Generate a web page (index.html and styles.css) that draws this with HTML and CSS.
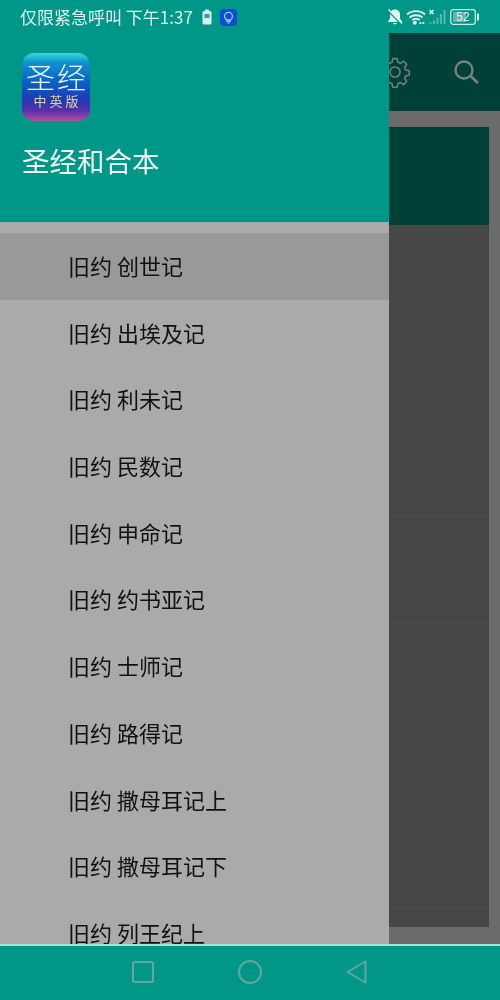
FILE: index.html
```html
<!DOCTYPE html>
<html lang="zh-CN">
<head>
    <meta charset="UTF-8">
    <meta name="viewport" content="width=device-width, initial-scale=1.0">
    <title>圣经和合本</title>
    <link rel="stylesheet" href="styles.css">
</head>
<body>
    <div class="screen">
        <div class="status-bar">
            <div class="status-left">
                <span class="status-text">仅限紧急呼叫 下午1:37</span>
                <svg class="ic-charge" width="10" height="16" viewBox="0 0 10 16">
                    <rect x="3" y="0.5" width="4" height="2" fill="#d8f0ec"/>
                    <rect x="0.5" y="2" width="9" height="13.5" rx="1.5" fill="#d8f0ec"/>
                    <rect x="2.5" y="5" width="5" height="4" fill="#2ca597"/>
                </svg>
                <svg class="ic-bulb" width="17" height="17" viewBox="0 0 17 17">
                    <rect width="17" height="17" rx="4" fill="#0d4fd0"/>
                    <circle cx="8.5" cy="7.2" r="3.9" fill="none" stroke="#a9c8f2" stroke-width="1.2"/>
                    <path d="M6.8 10.8v1.6h3.4v-1.6M7.2 14h2.6" fill="none" stroke="#a9c8f2" stroke-width="1.2"/>
                </svg>
            </div>
            <div class="status-right">
                <svg width="16" height="16" viewBox="0 0 16 16">
                    <path d="M8 0.500c-3.200 0-5 2.300-5 5.100v3.900L0.600 13h14.800L13 9.500V5.600c0-2.800-1.800-5.100-5-5.100zM6 14a2.100 2.100 0 0 0 4 0z" fill="#e2f4f1"/>
                    <path d="M1.500 1.800 14.500 15.300" stroke="#009688" stroke-width="2"/>
                    <path d="M1.500 0.500 15 14.500" stroke="#e2f4f1" stroke-width="1.400"/>
                </svg>
                <svg width="20" height="16" viewBox="0 0 20 16">
                    <path d="M1 5.500C6 1 14 1 19 5.500M3.500 8.500C7 5.500 13 5.500 16.500 8.500M6.300 11C8.200 9.500 11.800 9.500 13.700 11" fill="none" stroke="#e2f4f1" stroke-width="1.800"/>
                    <circle cx="8.800" cy="13.800" r="2" fill="#e2f4f1"/>
                    <path d="M13.500 13h1.800v2h-1.800zM16.500 13h1.800v2h-1.800z" fill="#e2f4f1"/>
                </svg>
                <svg width="18" height="16" viewBox="0 0 18 16">
                    <path d="M0.500 1 4.500 5M4.500 1 0.500 5" stroke="#e2f4f1" stroke-width="1.500"/>
                    <path d="M0.500 13.500h2v1.500h-2zM4 11.500h2v3.500H4zM7.500 8.500h2v6.500h-2zM11 5h2v10h-2zM14.500 1h2v14h-2z" fill="#57b5aa"/>
                </svg>
                <svg width="30" height="16" viewBox="0 0 30 16">
                    <rect x="0.700" y="0.700" width="24.600" height="14.600" rx="2.500" fill="none" stroke="#cdebe6" stroke-width="1.300"/>
                    <rect x="3" y="3" width="13" height="10" fill="#62b5aa"/>
                    <rect x="27" y="4.500" width="2" height="7" fill="#cdebe6"/>
                    <text x="13" y="12.300" class="batt-num">52</text>
                </svg>
            </div>
        </div>

        <div class="stage">
            <div class="app">
                <div class="toolbar">
                    <svg class="tool-gear" width="32" height="32" viewBox="0 0 24 24">
                        <path d="M10.300 2h3.400l.5 2.700 1.900.8 2.300-1.600 2.400 2.400-1.600 2.300.8 1.900 2.700.5v3.400l-2.700.5-.8 1.900 1.600 2.300-2.400 2.400-2.300-1.600-1.900.8-.5 2.700h-3.400l-.5-2.700-1.900-.8-2.300 1.600-2.400-2.400 1.600-2.300-.8-1.900-2.700-.5v-3.400l2.700-.5.8-1.900-1.600-2.300 2.400-2.400 2.300 1.600 1.900-.8z" fill="none" stroke="#6f7f7b" stroke-width="1.200" stroke-linejoin="round"/>
                        <circle cx="12" cy="12" r="3.800" fill="none" stroke="#6f7f7b" stroke-width="1.200"/>
                    </svg>
                    <svg class="tool-search" width="28" height="28" viewBox="0 0 28 28">
                        <circle cx="12" cy="12" r="8.500" fill="none" stroke="#75837f" stroke-width="2.400"/>
                        <path d="M18.500 18 26 25" stroke="#75837f" stroke-width="2.800"/>
                    </svg>
                </div>
                <div class="content">
                    <div class="card-head"></div>
                    <div class="row"></div>
                    <div class="row"></div>
                    <div class="row"></div>
                    <div class="row"></div>
                    <div class="row"></div>
                    <div class="row"></div>
                    <div class="row"></div>
                    <div class="row"></div>
                </div>
            </div>

            <div class="drawer">
                <div class="drawer-head">
                    <div class="logo">
                        <span class="logo-big">圣经</span>
                        <span class="logo-small">中英版</span>
                    </div>
                    <div class="drawer-title">圣经和合本</div>
                </div>
                <div class="menu">
                    <div class="menu-item active">旧约 创世记</div>
                    <div class="menu-item">旧约 出埃及记</div>
                    <div class="menu-item">旧约 利未记</div>
                    <div class="menu-item">旧约 民数记</div>
                    <div class="menu-item">旧约 申命记</div>
                    <div class="menu-item">旧约 约书亚记</div>
                    <div class="menu-item">旧约 士师记</div>
                    <div class="menu-item">旧约 路得记</div>
                    <div class="menu-item">旧约 撒母耳记上</div>
                    <div class="menu-item">旧约 撒母耳记下</div>
                    <div class="menu-item">旧约 列王纪上</div>
                </div>
            </div>
        </div>

        <div class="nav-bar">
            <svg width="24" height="24" viewBox="0 0 24 24"><rect x="2" y="2" width="20" height="20" rx="1.500" fill="none" stroke="#5fa9a1" stroke-width="2"/></svg>
            <svg width="26" height="26" viewBox="0 0 26 26"><circle cx="13" cy="13" r="11" fill="none" stroke="#5fa9a1" stroke-width="2"/></svg>
            <svg width="24" height="26" viewBox="0 0 24 26"><path d="M20.500 2.500V23.500L2.500 13z" fill="none" stroke="#5fa9a1" stroke-width="2" stroke-linejoin="round"/></svg>
        </div>
    </div>
</body>
</html>
```

FILE: styles.css
```css
body {
    margin: 0;
    font-family: "Noto Sans CJK SC", "Liberation Sans", sans-serif;
    background-color: #009688;
}
.screen {
    display: flex;
    flex-direction: column;
    width: 500px;
    height: 1000px;
    overflow: hidden;
    filter: blur(0.3px);
}
.status-bar {
    display: flex;
    justify-content: space-between;
    align-items: center;
    flex: none;
    height: 33px;
    padding: 1px 20px 0 20px;
    box-sizing: border-box;
    background-color: #009688;
}
.status-left {
    display: flex;
    align-items: center;
}
.status-text {
    font-size: 17px;
    line-height: 32px;
    color: #dff3f0;
    white-space: nowrap;
}
.ic-charge {
    margin-left: 9px;
}
.ic-bulb {
    margin-left: 8px;
}
.status-right {
    display: flex;
    align-items: center;
    gap: 3px;
}
.batt-num {
    font-family: "Liberation Sans", sans-serif;
    font-size: 12px;
    text-anchor: middle;
    fill: #e4f5f2;
}
.stage {
    position: relative;
    flex: 1;
    min-height: 0;
}
.app {
    display: flex;
    flex-direction: column;
    height: 100%;
    background-color: #6b6b6b;
}
.toolbar {
    display: flex;
    align-items: center;
    flex: none;
    height: 78px;
    background-color: #004038;
}
.tool-gear {
    margin-left: 379px;
}
.tool-search {
    margin-left: 41px;
}
.content {
    flex: 1;
    min-height: 0;
    margin: 16px 11px 17px 16px;
    overflow: hidden;
    background-color: #474747;
}
.card-head {
    height: 98px;
    background-color: #004038;
}
.row {
    height: 97px;
    border-bottom: 1px solid #414141;
}
.drawer {
    position: absolute;
    top: 0;
    bottom: 0;
    left: 0;
    width: 389px;
    overflow: hidden;
    background-color: #aaaaaa;
}
.drawer-head {
    height: 189px;
    padding: 20px 0 0 22px;
    box-sizing: border-box;
    background-color: #009688;
    border-bottom: 1px solid #008d7f;
}
.logo {
    display: flex;
    flex-direction: column;
    align-items: center;
    width: 68px;
    height: 68px;
    border-radius: 12px;
    overflow: hidden;
    background: linear-gradient(180deg, #36dbd6 0%, #1090d0 14%, #0a5fc0 45%, #1f3ab5 68%, #5a2fa8 85%, #b0509f 100%);
}
.logo-big {
    margin-top: 6px;
    padding-left: 2px;
    font-size: 29px;
    line-height: 34px;
    font-weight: 300;
    letter-spacing: 2px;
    color: #e6f7fa;
    white-space: nowrap;
}
.logo-small {
    padding-left: 3px;
    font-size: 13px;
    line-height: 16px;
    letter-spacing: 3px;
    color: #d9d7a8;
    white-space: nowrap;
}
.drawer-title {
    margin-top: 19px;
    font-size: 27.5px;
    line-height: 40px;
    color: #eef8f7;
    white-space: nowrap;
}
.menu {
    padding-top: 11px;
}
.menu-item {
    height: 66.7px;
    padding-left: 68px;
    font-size: 22px;
    line-height: 65px;
    color: #111111;
    white-space: nowrap;
}
.menu-item.active {
    background-color: #999999;
}
.nav-bar {
    display: flex;
    justify-content: center;
    align-items: center;
    gap: 82px;
    flex: none;
    height: 52px;
    padding-bottom: 2px;
    background-color: #009688;
    border-top: 2px solid #a8e0da;
}
```
